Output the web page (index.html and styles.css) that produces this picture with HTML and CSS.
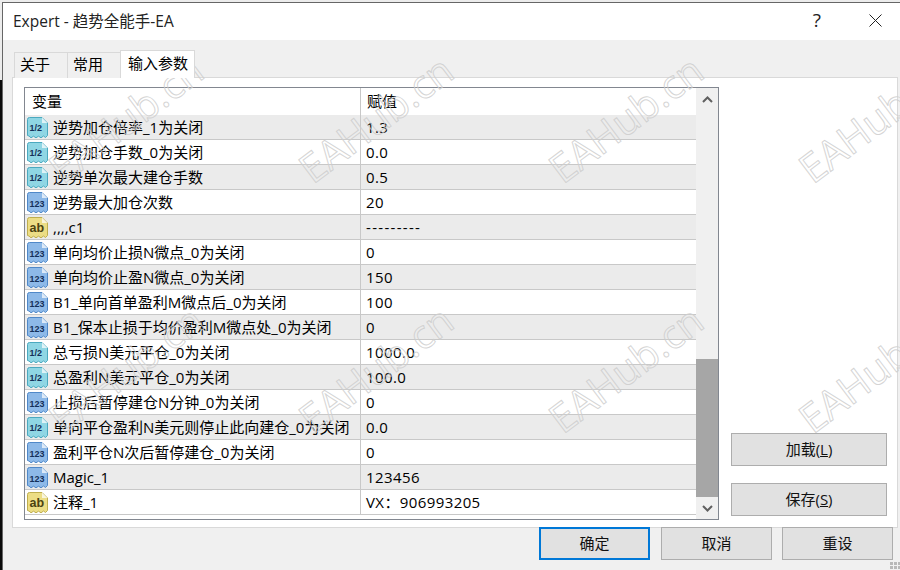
FILE: index.html
```html
<!DOCTYPE html>
<html lang="zh">
<head>
<meta charset="utf-8">
<title>Expert - 趋势全能手-EA</title>
<link rel="stylesheet" href="styles.css">
</head>
<body>
<svg class="defs" width="0" height="0" aria-hidden="true">
  <defs>
    <g id="doc-shape">
      <path d="M2.5 .5H15L20.5 6V18.5L18.5 20.5 16.5 19 14 20.8 11.5 19.2 9 20.8 6.5 19.2 4 20.8 2 19 .5 18.5V2.5Q.5 .5 2.5 .5Z"/>
      <path class="doc-fold" d="M15 .5V6H20.5Z"/>
    </g>
    <symbol id="icon-half" viewBox="0 0 21 21"><g class="icon-teal"><use href="#doc-shape"/><text x="2.5" y="13.5" class="icon-text">1/2</text></g></symbol>
    <symbol id="icon-int" viewBox="0 0 21 21"><g class="icon-blue"><use href="#doc-shape"/><text x="2.5" y="15" class="icon-text">123</text></g></symbol>
    <symbol id="icon-str" viewBox="0 0 21 21"><g class="icon-yellow"><use href="#doc-shape"/><text x="2.5" y="15" class="icon-text icon-text-lg">ab</text></g></symbol>
  </defs>
</svg>
<div class="window">
  <header class="titlebar">
    <span class="title">Expert - 趋势全能手-EA</span>
    <span class="help">?</span>
    <svg class="close" width="13" height="13" viewBox="0 0 13 13"><path d="M.5 .5L12.5 12.5M12.5 .5L.5 12.5"/></svg>
  </header>
  <nav class="tabs">
    <span class="tab">关于</span>
    <span class="tab">常用</span>
    <span class="tab tab-active">输入参数</span>
  </nav>
  <section class="panel">
    <div class="listbox">
      <div class="list">
        <div class="row row-head"><span class="cell-name">变量</span><span class="cell-value">赋值</span></div>
        <div class="row"><span class="cell-name"><svg class="icon"><use href="#icon-half"/></svg>逆势加仓倍率_1为关闭</span><span class="cell-value">1.3</span></div>
        <div class="row"><span class="cell-name"><svg class="icon"><use href="#icon-half"/></svg>逆势加仓手数_0为关闭</span><span class="cell-value">0.0</span></div>
        <div class="row"><span class="cell-name"><svg class="icon"><use href="#icon-half"/></svg>逆势单次最大建仓手数</span><span class="cell-value">0.5</span></div>
        <div class="row"><span class="cell-name"><svg class="icon"><use href="#icon-int"/></svg>逆势最大加仓次数</span><span class="cell-value">20</span></div>
        <div class="row"><span class="cell-name"><svg class="icon"><use href="#icon-str"/></svg>,,,,c1</span><span class="cell-value cell-dash">---------</span></div>
        <div class="row"><span class="cell-name"><svg class="icon"><use href="#icon-int"/></svg>单向均价止损N微点_0为关闭</span><span class="cell-value">0</span></div>
        <div class="row"><span class="cell-name"><svg class="icon"><use href="#icon-int"/></svg>单向均价止盈N微点_0为关闭</span><span class="cell-value">150</span></div>
        <div class="row"><span class="cell-name"><svg class="icon"><use href="#icon-int"/></svg>B1_单向首单盈利M微点后_0为关闭</span><span class="cell-value">100</span></div>
        <div class="row"><span class="cell-name"><svg class="icon"><use href="#icon-int"/></svg>B1_保本止损于均价盈利M微点处_0为关闭</span><span class="cell-value">0</span></div>
        <div class="row"><span class="cell-name"><svg class="icon"><use href="#icon-half"/></svg>总亏损N美元平仓_0为关闭</span><span class="cell-value">1000.0</span></div>
        <div class="row"><span class="cell-name"><svg class="icon"><use href="#icon-half"/></svg>总盈利N美元平仓_0为关闭</span><span class="cell-value">100.0</span></div>
        <div class="row"><span class="cell-name"><svg class="icon"><use href="#icon-int"/></svg>止损后暂停建仓N分钟_0为关闭</span><span class="cell-value">0</span></div>
        <div class="row"><span class="cell-name"><svg class="icon"><use href="#icon-half"/></svg>单向平仓盈利N美元则停止此向建仓_0为关闭</span><span class="cell-value">0.0</span></div>
        <div class="row"><span class="cell-name"><svg class="icon"><use href="#icon-int"/></svg>盈利平仓N次后暂停建仓_0为关闭</span><span class="cell-value">0</span></div>
        <div class="row"><span class="cell-name"><svg class="icon"><use href="#icon-int"/></svg>Magic_1</span><span class="cell-value">123456</span></div>
        <div class="row"><span class="cell-name"><svg class="icon"><use href="#icon-str"/></svg>注释_1</span><span class="cell-value">VX：906993205</span></div>
      </div>
      <div class="scrollbar">
        <div class="arrow"><svg width="11" height="7" viewBox="0 0 11 7"><path d="M1 6L5.5 1.5 10 6"/></svg></div>
        <div class="track"><div class="thumb"></div></div>
        <div class="arrow"><svg width="11" height="7" viewBox="0 0 11 7"><path d="M1 1L5.5 5.5 10 1"/></svg></div>
      </div>
    </div>
    <div class="side">
      <button class="btn btn-side">加载(<u>L</u>)</button>
      <button class="btn btn-side">保存(<u>S</u>)</button>
    </div>
  </section>
  <footer class="actions">
    <button class="btn btn-action btn-default">确定</button>
    <button class="btn btn-action">取消</button>
    <button class="btn btn-action">重设</button>
  </footer>
  <div class="grip"></div>
</div>
<div class="watermarks" aria-hidden="true">
  <span class="mark">EAHub.cn</span><span class="mark">EAHub.cn</span><span class="mark">EAHub.cn</span><span class="mark">EAHub.cn</span>
  <span class="mark">EAHub.cn</span><span class="mark">EAHub.cn</span><span class="mark">EAHub.cn</span><span class="mark">EAHub.cn</span>
</div>
</body>
</html>
```
FILE: styles.css
```css
* { box-sizing: border-box; }
html, body { margin: 0; height: 100%; }
body {
  width: 900px;
  height: 570px;
  overflow: hidden;
  position: relative;
  padding: 2px 0 0 2px;
  background: linear-gradient(#ececec 0 80px, #0a0a0a 80px);
  font-family: "Open Sans", "Noto Sans CJK SC", sans-serif;
  font-size: 15px;
  color: #000;
}
.defs { position: absolute; }

.window {
  width: 898px;
  height: 568px;
  position: relative;
  display: flex;
  flex-direction: column;
  background: #f0f0f0;
  border-top: 1px solid #666;
  border-left: 1px solid #666;
}

.titlebar {
  height: 37px;
  flex: none;
  display: flex;
  align-items: center;
  background: #fff;
  padding: 0 0 2px 10px;
  font-size: 15.5px;
}
.title { flex: 1; color: #222; }
.help { font-size: 19px; line-height: 1; margin-right: 48px; color: #222; }
.close { margin-right: 18px; }
.close path { stroke: #222; fill: none; }

.tabs {
  display: flex;
  align-items: flex-end;
  height: 38px;
  flex: none;
  padding-left: 11px;
  position: relative;
  z-index: 1;
  margin-bottom: -1px;
}
.tab {
  width: 54px;
  height: 26px;
  background: #f0f0f0;
  border: 1px solid #d9d9d9;
  border-bottom: none;
  padding-left: 5px;
  font-size: 15px;
  line-height: 23px;
  margin-right: -1px;
}
.tab-active {
  width: 75px;
  height: 28px;
  padding-left: 7px;
  background: #fff;
  line-height: 25px;
}

.panel {
  margin-left: 9px;
  width: 886px;
  height: 451px;
  flex: none;
  display: flex;
  padding: 9px 0 7px 11px;
  background: #fff;
  border: 1px solid #d9d9d9;
}

.listbox {
  width: 695px;
  height: 433px;
  display: flex;
  border: 1px solid #828790;
  flex: none;
}
.list { width: 671px; flex: none; }
.row {
  display: flex;
  height: 25px;
  line-height: 24px;
  border-bottom: 1px solid #c8c8c8;
  padding-left: 2px;
  white-space: nowrap;
}
.row:nth-child(even) { background: #ebebeb; }
.row-head {
  height: 27px;
  line-height: 27px;
  background: #fff;
  border-bottom: none;
  padding-left: 7px;
}
.cell-name {
  width: 334px;
  flex: none;
  display: flex;
  align-items: center;
  border-right: 1px solid #c8c8c8;
}
.row-head .cell-name { width: 329px; }
.cell-value { padding-left: 5px; letter-spacing: .4px; }
.cell-dash { letter-spacing: 1.3px; }
.row-head .cell-value { padding-left: 6px; letter-spacing: 0; }
.icon { width: 21px; height: 21px; margin-right: 5px; flex: none; }

.doc-fold { fill: #fff; fill-opacity: .7; stroke: none; }
.icon-teal { fill: #8fd6e4; stroke: #4ba9bf; }
.icon-blue { fill: #8db9e8; stroke: #4f88c8; }
.icon-yellow { fill: #ecdd85; stroke: #bfae4e; }
.icon-text {
  font-family: "Liberation Sans", sans-serif;
  font-size: 9px;
  font-weight: 700;
  fill: #14305a;
  stroke: none;
}
.icon-text-lg { font-size: 12.5px; fill: #4d4310; }

.scrollbar {
  flex: 1;
  display: flex;
  flex-direction: column;
  background: #f0f0f0;
}
.arrow {
  height: 22px;
  flex: none;
  display: flex;
  align-items: center;
  justify-content: center;
}
.arrow path { stroke: #606060; stroke-width: 2; fill: none; }
.track { flex: 1; display: flex; flex-direction: column; justify-content: flex-end; }
.thumb { height: 138px; background: #a6a6a6; }

.side {
  flex: 1;
  display: flex;
  flex-direction: column;
  justify-content: flex-end;
  gap: 17px;
  padding: 0 0 4px 12px;
}

.btn {
  background: #e1e1e1;
  border: 1px solid #adadad;
  font-family: "Open Sans", "Noto Sans CJK SC", sans-serif;
  font-size: 15px;
  color: #111;
  padding: 0 0 2px;
  height: 33px;
}
.btn-side { width: 156px; }
.btn-action { width: 111px; }
.btn-default { border: 2px solid #0078d7; }

.actions {
  display: flex;
  justify-content: flex-end;
  gap: 11px;
  padding-right: 7px;
  margin-top: -1px;
  position: relative;
}
.actions .btn:last-child { margin-left: -1px; }

.grip {
  position: absolute;
  right: 0;
  bottom: 0;
  width: 10px;
  height: 9px;
  background:
    repeating-linear-gradient(0deg, #f0f0f0 0 1px, transparent 1px 4px),
    repeating-linear-gradient(90deg, #b8b8b8 0 3px, #f0f0f0 3px 4px);
}

.watermarks {
  position: absolute;
  left: 0;
  top: -7px;
  width: 1000px;
  display: grid;
  grid-template-columns: repeat(4, 250px);
  grid-auto-rows: 250px;
  pointer-events: none;
}
.mark {
  display: flex;
  align-items: center;
  justify-content: center;
  font-family: "Open Sans", sans-serif;
  font-size: 40px;
  color: rgba(255, 255, 255, .08);
  -webkit-text-stroke: 1px rgba(205, 205, 205, .85);
  transform: rotate(-37deg);
  white-space: nowrap;
}
```
